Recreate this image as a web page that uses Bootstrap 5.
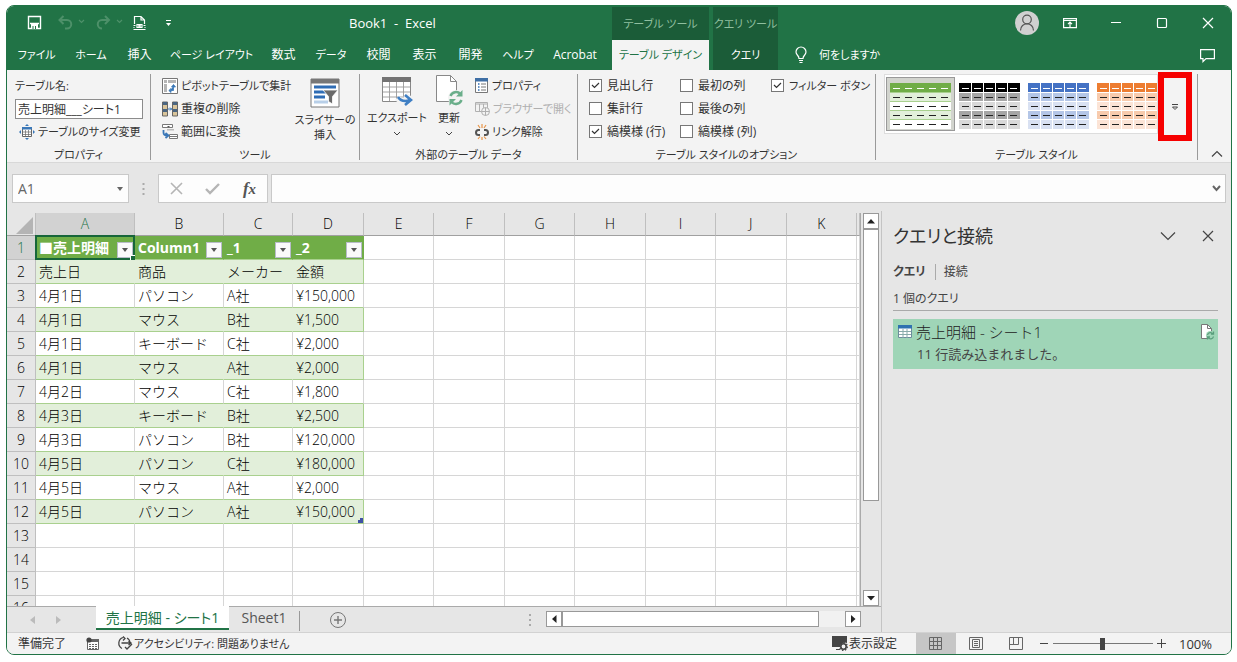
<!DOCTYPE html>
<html lang="ja">
<head>
<meta charset="utf-8">
<meta name="viewport" content="width=device-width, initial-scale=1">
<title>Book1 - Excel</title>
<link href="https://cdn.jsdelivr.net/npm/bootstrap@5.3.0/dist/css/bootstrap.min.css" rel="stylesheet">
<style>
:root{--green:#217346;--deep:#1b5c38;--chrome:#e6e6e6;--ribbon:#f3f3f3;--ink:#333}
body{background:#fff;font:12px/16px "Open Sans","Noto Sans CJK JP",sans-serif;color:var(--ink);font-feature-settings:"palt";overflow:hidden;padding:5px 5px 7px 6px;height:100vh}
button,input{font:inherit;font-feature-settings:inherit;color:inherit;padding:0;border:0;background:none}
svg{display:block;flex:none}
a{color:inherit;text-decoration:none}
/* smaller size for labels that are mostly kana */
.kana{font-size:11px}
.win{height:100%;border:1px solid var(--green);border-radius:8px;overflow:hidden;background:var(--chrome)}
.bar{flex:none}
/* title bar */
.top{background:var(--green);color:#fff;height:65px;margin-top:-1px}
.top-left{flex:0 0 605px}
.title-row{height:35px}
.qa{padding-left:20px}
.doc-title{font-size:13px;padding-left:176px;white-space:pre}
.tabs{display:grid;grid-template-columns:59px 50px 47px 97px 47px 48px 47px 45px 47px 48px 66px;height:30px}
.tabs a,.ctx a{display:flex;align-items:center;justify-content:center;white-space:nowrap}
.ctx{background:var(--deep);margin-top:2px;margin-right:4px;font-size:11px}
.ctx a{height:30px}
.ctx .cap{height:33px;color:#8fbf9f;display:flex;align-items:center;justify-content:center;white-space:nowrap}
.ctx.t1{width:97px}.ctx.t2{width:65px}
.ctx a.on{background:var(--ribbon);color:var(--green)}
.ctrl{width:46px;display:flex;justify-content:center}
/* ribbon */
.ribbon{background:var(--ribbon);height:93px;border-bottom:1px solid #d8d8d8}
.grp{border-right:1px solid #9a9a9a;height:86px;margin-top:4px;min-width:0}
.grp-body{height:74px}
.grp-name{text-align:center;font-size:11px;height:16px;margin-top:-1px}
.cmds{display:grid;grid-auto-rows:23px;align-items:center;white-space:nowrap;align-content:start}
.cmds button,.cmds label{display:flex;align-items:center;gap:3px}
.cmds label{gap:5px}
.tname{border:1px solid #8c8c8c;background:#fff;width:128px;height:20px;padding:0 2px}
.big{display:flex;flex-direction:column;align-items:center;white-space:nowrap;line-height:15px;font-size:11px}
.form-check-input{margin:0;width:13px;height:13px;border:1px solid #777;border-radius:0!important;background-color:#fff;background-size:13px;flex:none}
.form-check-input:checked{background-color:#fff;border-color:#777;background-image:url("data:image/svg+xml,%3Csvg xmlns='http://www.w3.org/2000/svg' viewBox='0 0 13 13'%3E%3Cpath d='M3 6l2.500 2.500 4.500-4.500' fill='none' stroke='%23333' stroke-width='1.200'/%3E%3C/svg%3E")}
.gallery{background:#fff;border:1px solid #ddd;height:60px;margin-left:8px;width:274px;padding:2px 0 0 1px}
.gallery button{width:69px;height:54px;padding:4px 4px 0;overflow:hidden;display:block}
.gallery button.sel{background:#d2d4ce;outline:1px solid #999;outline-offset:-1px}
.g0{--h:#70ad47;--a:#e2efda;--b:#fff;--s:#a9d08e}
.g1{--h:#000;--a:#a6a6a6;--b:#d9d9d9;--s:#fff}
.g2{--h:#4472c4;--a:#b4c6e7;--b:#d9e1f2;--s:#fff}
.g3{--h:#ed7d31;--a:#f8cbad;--b:#fce4d6;--s:#fff}
.more{width:34px;height:69px;border:6px solid #f60000;margin-top:-2px;display:flex;align-items:center;justify-content:center;background:var(--ribbon)}
/* formula bar */
.fbar{height:48px;padding:11px 5px 8px 5px}
.fbox{background:#fdfdfd;border:1px solid #c9c9c9;height:29px;display:flex;align-items:center}
.namebox{width:117px;padding:0 5px}
.namebox input{width:80px;font-size:14px;color:#666}
/* sheet */
.main{min-height:0;flex:1 1 0}
.left{flex:0 1 875px;border-right:1px solid #c4c4c4}
.gridwrap{min-height:0;overflow:hidden;width:854px;border-right:1px solid #aaa;margin-top:2px}
.sheet{table-layout:fixed;border-collapse:separate;border-spacing:0;width:100%;font:300 14px/20px "Open Sans","Noto Sans CJK JP",sans-serif;font-feature-settings:normal;background:#fff;color:#000}
.sheet th{font-weight:300;background:var(--chrome);text-align:center;padding:0;border-right:1px solid #bfbfbf;border-bottom:1px solid #bfbfbf;height:24px}
.sheet td{height:24px;padding:0 0 0 3px;border-right:1px solid #d6d6d6;border-bottom:1px solid #d6d6d6;white-space:nowrap;position:relative;line-height:20px}
.sheet thead th{border-bottom-color:#a0a0a0;height:23px}
.sheet th.hot{background:#d2d2d2;color:var(--green)}
.sheet thead th.hot{border-bottom:1px solid var(--green)}
.sheet td.t{border-bottom-color:#a9d08e}
.sheet td.band{background:#e2efda;border-right-color:#e2efda}
.sheet td.band.last{border-right-color:#a9d08e}
.sheet td.hd{background:#70ad47;border-right-color:#70ad47;color:#fff;font-weight:700}
.filt{position:absolute;right:1px;bottom:1px;width:16px;height:16px;background:#fafafa;border:1px solid #b8bcc8;display:flex;align-items:center;justify-content:center}
.cursor{position:absolute;inset:-1px;border:2px solid #17663a;pointer-events:none}
.cursor::after{content:"";position:absolute;right:-3px;bottom:-3px;box-sizing:content-box;width:4px;height:4px;background:#17663a;border:1px solid #fff}
.corner{position:absolute;right:0;bottom:0;width:5px;height:5px;border:solid #3f51a5;border-width:0 3px 3px 0}
.vs{width:16px;margin:2px 2px 0 2px}
.sbtn{width:16px;height:16px;border:1px solid #999;background:#fff;display:flex;align-items:center;justify-content:center;flex:none}
.thumb{background:#fff;border:1px solid #999}
.sheets{height:26px;border-top:1px solid #aaa;font-size:14px}
.sheets a{white-space:nowrap}
.sheets a.cur{background:#fff;border-bottom:2px solid var(--green);width:133px;height:24px;line-height:23px;text-align:center;color:var(--green);margin:-1px 0 0}
.hs{width:315px;margin-top:4px}
/* query pane */
.pane{padding:11px 13px 0 11px;color:#444}
.pane h2{font-size:18px;line-height:28px;margin:0;color:#333}
.pane nav a+a{border-left:1px solid #aaa}
.pane nav a{padding-right:9px}
.count{margin-top:11px;padding-bottom:3px;border-bottom:1px solid #aaa}
.qcard{background:#9fd5b7;height:50px;padding:3px 3px 0 5px;margin-top:8px;font-feature-settings:normal}
.qcard .nm{font-size:15px;line-height:20px;font-weight:300;color:#222}
.qcard .st{font-size:13px;line-height:18px;padding-left:19px;margin-top:3px}
/* status bar */
.status{background:var(--ribbon);height:22px;border-top:1px solid #d2d2d2;white-space:nowrap}
.view{width:40px;height:22px;display:flex;align-items:center;justify-content:center}
.view.on{background:#c6c6c6}
.zoom{-webkit-appearance:none;appearance:none;width:100px;height:14px;margin:0 4px;background:linear-gradient(#777,#777) center/100% 1px no-repeat}
.zoom::-webkit-slider-thumb{-webkit-appearance:none;width:5px;height:12px;background:#444}
</style>
</head>
<body>
<svg width="0" height="0" class="position-absolute" aria-hidden="true">
<symbol id="thumb" viewBox="0 0 61 46">
<g stroke="none"><path d="M0 0h61v10H0z" fill="var(--h)"/><path d="M0 10h61v9H0zM0 28h61v9H0z" fill="var(--a)"/><path d="M0 19h61v9H0zM0 37h61v9H0z" fill="var(--b)"/></g>
<path d="M0 9.500h61M0 18.500h61M0 27.500h61M0 36.500h61" stroke="var(--s)"/>
<path d="M3 5.500h59" stroke="#fff" stroke-dasharray="7 5"/>
<path d="M3 14.500h59M3 23.500h59M3 32.500h59M3 41.500h59" stroke="#222" stroke-dasharray="7 5"/>
</symbol>
<symbol id="cols" viewBox="0 0 61 46"><path d="M12.500 0v46M24.500 0v46M36.500 0v46M48.500 0v46" stroke="#fff"/></symbol>
</svg>
<div class="win d-flex flex-column">
<header class="top bar d-flex">
  <div class="top-left">
    <div class="title-row d-flex align-items-center">
      <div class="qa d-flex align-items-center">
        <button aria-label="保存"><svg width="15" height="15" fill="none" stroke="#fff" stroke-width="1.400"><path d="M1.500 1.500h12v12h-12zM3 8.500h9"/><path d="M4 9h7v5H4z" fill="#fff" stroke="none"/><path d="M6 14v-3M8.500 14v-3" stroke="#217346" stroke-width="1"/></svg></button>
        <button aria-label="元に戻す" class="ms-3"><svg width="29" height="15" fill="none" stroke="#4d9069" stroke-width="2"><path d="M5.500 1L1.500 5l4 4M2 5h7a4 4 0 0 1 0 8.500H7"/><path d="M21 5l2.500 2.500L26 5" stroke-width="1.200"/></svg></button>
        <button aria-label="やり直し" class="ms-2"><svg width="30" height="15" fill="none" stroke="#4d9069" stroke-width="2"><path d="M10 1l4 4-4 4M14 5H7a4 4 0 0 0 0 8.500"/><path d="M22 5l2.500 2.500L27 5" stroke-width="1.200"/></svg></button>
        <button aria-label="印刷プレビュー" class="ms-2"><svg width="14" height="16" fill="none" stroke="#fff" stroke-width="1.200"><path d="M1.500 9V1.500h6.500l3.500 3.500V9M8 1.500V5h3.500M.5 14.500h12"/><path d="M.5 10.500h2M10.500 10.500h2M.5 12.500h1M11.500 12.500h1M4 9.500h5v3H4z"/><circle cx="6.500" cy="11" r=".8"/></svg></button>
        <button aria-label="ツールバーのカスタマイズ" class="ms-3"><svg width="10" height="10"><path d="M3 2.500h5" stroke="#fff"/><path d="M3 5h5L5.500 8z" fill="#fff"/></svg></button>
      </div>
      <span class="doc-title">Book1  -  Excel</span>
    </div>
    <nav class="tabs">
      <a class="kana" href="#">ファイル</a><a class="kana" href="#">ホーム</a><a href="#">挿入</a><a class="kana" href="#">ページ レイアウト</a><a href="#">数式</a><a class="kana" href="#">データ</a><a href="#">校閲</a><a href="#">表示</a><a href="#">開発</a><a class="kana" href="#">ヘルプ</a><a href="#">Acrobat</a>
    </nav>
  </div>
  <div class="ctx t1"><div class="cap">テーブル ツール</div><a class="on" href="#">テーブル デザイン</a></div>
  <div class="ctx t2"><div class="cap">クエリ ツール</div><a href="#">クエリ</a></div>
  <div class="flex-fill d-flex flex-column">
    <div class="title-row d-flex align-items-center justify-content-end">
      <svg width="24" height="24" class="me-2"><circle cx="12" cy="12" r="12" fill="#d0d0d0"/><g fill="none" stroke="#555" stroke-width="1.200"><circle cx="12" cy="8.500" r="4.300"/><path d="M5.500 19.500c0-9 13-9 13 0"/></g></svg>
      <button class="ctrl" aria-label="リボンの表示オプション"><svg width="14" height="12" fill="none" stroke="#fff" stroke-width="1.200"><path d="M.6 1.600h12.800v9H.6zM.6 3.500h12.800M7 10V5.500M5 7.200l2-2 2 2"/></svg></button>
      <button class="ctrl" aria-label="最小化"><svg width="12" height="12"><path d="M1 5.500h10" stroke="#fff" stroke-width="1.200"/></svg></button>
      <button class="ctrl" aria-label="最大化"><svg width="12" height="12"><rect x="1.500" y="1.500" width="9" height="9" rx="1" fill="none" stroke="#fff" stroke-width="1.200"/></svg></button>
      <button class="ctrl" aria-label="閉じる"><svg width="12" height="12"><path d="M1 1l10 10M11 1L1 11" stroke="#fff" stroke-width="1.200"/></svg></button>
    </div>
    <div class="d-flex align-items-center pe-3 flex-fill" style="padding-left:13px">
      <svg width="12" height="18" fill="none" stroke="#fff" stroke-width="1.200"><path d="M4 12.500C4 9.500 1 9 1 6a5 5 0 0 1 10 0c0 3-3 3.500-3 6.500zM4 14.500h4M4.500 16.500h3"/></svg>
      <a href="#" class="kana ms-2 ps-1">何をしますか</a>
      <button class="ms-auto" aria-label="コメント"><svg width="15" height="15" fill="none" stroke="#fff" stroke-width="1.200"><path d="M.6 1.600h13.800v9H6l-3 3v-3H.6z"/></svg></button>
    </div>
  </div>
</header>

<section class="ribbon bar d-flex">
  <div class="grp" style="flex:0 0 144px">
    <div class="grp-body cmds px-2">
      <label for="tn" class="kana">テーブル名:</label>
      <input id="tn" class="tname" value="売上明細___シート1">
      <button class="kana ps-1"><svg width="16" height="16"><path d="M3.500 3.500h9v9h-9z" fill="#fff" stroke="#666"/><path d="M3 3h10v2.500H3z" fill="#3b78b8"/><path d="M4 8h8M4 10.500h8M6.500 6v6M9.500 6v6" stroke="#666" stroke-width=".7"/><path d="M0 8l2-2v4zM16 8l-2-2v4zM8 0L6 2h4zM8 16l-2-2h4z" fill="#3b78b8"/></svg>テーブルのサイズ変更</button>
    </div>
    <div class="grp-name">プロパティ</div>
  </div>
  <div class="grp" style="flex:0 0 209px">
    <div class="grp-body d-flex">
      <div class="cmds" style="flex:0 0 136px;padding-left:11px">
        <button class="kana"><svg width="16" height="16"><path d="M.5.5h15v15H.5z" fill="#fff" stroke="#777"/><path d="M2 2h3v3H2zM6 2h8v3H6zM2 6h3v8H2z" fill="#b5b5b5"/><path d="M8 12.500h3.500V8M6.800 12.500L9 10.500v4zM11.500 6.500l-2 2.500h4z" fill="#3b78b8" stroke="#3b78b8" stroke-width=".8"/></svg>ピボットテーブルで集計</button>
        <button><svg width="16" height="16"><path d="M.5 1h5v14h-5zM10.500 1h5v14h-5z" fill="#d9c49a" stroke="#666"/><path d="M1 1h4v3H1zM1 8h4v3H1zM11 1h4v3h-4zM11 8h4v3h-4z" fill="#4a6582"/><path d="M6 8h4M8 6.500L9.500 8 8 9.500" stroke="#3b78b8" fill="none"/></svg>重複の削除</button>
        <button><svg width="16" height="16"><path d="M.5.500h10v3H.5zM7.500 10.500h8v4h-8zM7.500 12.500h8" fill="#fff" stroke="#777"/><path d="M1.500 6v2.500q0 3 4 3M3.500 9l3 2.500-3 2.500" fill="none" stroke="#3b78b8" stroke-width="1.800"/><path d="M5 2h3L6.500 3.500z" fill="#555"/><path d="M5 6.500h7v-1.500H5z" fill="#bbb"/></svg>範囲に変換</button>
      </div>
      <button class="big flex-fill"><svg width="30" height="30" class="mb-1 mt-1"><path d="M1 1h28v28H1z" fill="#fff" stroke="#777"/><path d="M1 1h28v4.500H1z" fill="#777"/><path d="M4 9h22M4 14h13M4 19h11" stroke="#2f6db5" stroke-width="3"/><path d="M4 24h14" stroke="#b8cfe8" stroke-width="3"/><path d="M13 12h15l-5.500 6.500V26l-4-2.500v-5z" fill="#6b6b6b" stroke="#fff" stroke-width=".8"/></svg>スライサーの<br>挿入</button>
    </div>
    <div class="grp-name">ツール</div>
  </div>
  <div class="grp" style="flex:0 0 218px">
    <div class="grp-body d-flex">
      <button class="big" style="flex:0 0 74px"><svg width="32" height="32" class="mb-1"><path d="M1.500 3.500h28v24h-28z" fill="#fff" stroke="#888"/><path d="M1 3h29v5H1z" fill="#737373"/><path d="M2 13h27M2 18h27M2 23h27M8.500 8v19M15.500 8v19M22.500 8v19" stroke="#999" stroke-width=".9"/><path d="M16 24q5 5 12 2M24 21l6 5-6 5" fill="none" stroke="#f3f3f3" stroke-width="6"/><path d="M17 23q4 6 12 3M24 21l6 5-6 5" fill="none" stroke="#3f7fc4" stroke-width="2.600"/></svg>エクスポート<svg width="8" height="14"><path d="M1 7l3 3 3-3" fill="none" stroke="#444"/></svg></button>
      <button class="big" style="flex:0 0 26px"><svg width="30" height="32" class="mb-1"><path d="M2.500 1.500h14l6 6v20h-20z" fill="#fff" stroke="#888"/><path d="M16.500 1.500v6h6" fill="none" stroke="#888"/><circle cx="22" cy="24" r="8" fill="#f3f3f3"/><path d="M16.500 22a6 6 0 0 1 10-2M27.500 26a6 6 0 0 1-10 2" fill="none" stroke="#6aae8a" stroke-width="2.400"/><path d="M28.500 16v6.500H22zM15.500 31.500V25H22z" fill="#6aae8a"/></svg>更新<svg width="8" height="14"><path d="M1 7l3 3 3-3" fill="none" stroke="#444"/></svg></button>
      <div class="cmds kana" style="padding-left:11px">
        <button><svg width="14" height="15"><path d="M.5.5h12v14H.5z" fill="#fff" stroke="#777"/><path d="M0 0h13v3.500H0z" fill="#3f6fa5"/><path d="M3 6h1.500M3 9h1.500M3 12h1.500" stroke="#2f6db5" stroke-width="1.500"/><path d="M6 6h5M6 9h5M6 12h5" stroke="#777"/></svg>プロパティ</button>
        <button disabled style="color:#b0b0b0"><svg width="15" height="15" fill="none" stroke="#b0b0b0"><path d="M.5 1.500h12v9H.5zM.5 3h12M4.500 3v7M8.500 3v4"/><circle cx="10.500" cy="10.500" r="4" fill="#f3f3f3"/><path d="M6.500 10.500h8M10.500 6.500v8"/></svg>ブラウザーで開く</button>
        <button><svg width="14" height="16"><path d="M5 6H3.500a2 2 0 0 0 0 5H5M9 6h1.500a2 2 0 0 1 0 5H9" fill="none" stroke="#555" stroke-width="2"/><path d="M7 0v4M3 1l2 3M11 1L9 4M7 16v-3M3 15l2-2.500M11 15l-2-2.500" stroke="#e8964a" stroke-width="1.200"/></svg>リンク解除</button>
      </div>
    </div>
    <div class="grp-name">外部のテーブル データ</div>
  </div>
  <div class="grp" style="flex:0 0 298px">
    <div class="grp-body cmds" style="grid-template-columns:91px 91px 1fr;padding-left:11px">
      <label><input class="form-check-input" type="checkbox" checked>見出し行</label><label><input class="form-check-input" type="checkbox">最初の列</label><label class="kana"><input class="form-check-input" type="checkbox" checked>フィルター ボタン</label>
      <label><input class="form-check-input" type="checkbox">集計行</label><label><input class="form-check-input" type="checkbox">最後の列</label><span></span>
      <label><input class="form-check-input" type="checkbox" checked>縞模様 (行)</label><label><input class="form-check-input" type="checkbox">縞模様 (列)</label>
    </div>
    <div class="grp-name">テーブル スタイルのオプション</div>
  </div>
  <div class="grp" style="flex:0 0 322px">
    <div class="grp-body d-flex">
      <div class="gallery d-flex overflow-hidden">
        <button class="g0 sel flex-shrink-0" aria-label="緑"><svg width="61" height="46"><use href="#thumb"/></svg></button>
        <button class="g1 flex-shrink-0" aria-label="黒"><svg width="61" height="46"><use href="#thumb"/><use href="#cols"/></svg></button>
        <button class="g2 flex-shrink-0" aria-label="青"><svg width="61" height="46"><use href="#thumb"/><use href="#cols"/></svg></button>
        <button class="g3 flex-shrink-0" aria-label="オレンジ"><svg width="61" height="46"><use href="#thumb"/><use href="#cols"/></svg></button>
      </div>
      <button class="more" aria-label="その他"><svg width="8" height="8" fill="none" stroke="#444"><path d="M1 1.500h6M1.500 4L4 6.500 6.500 4z"/></svg></button>
    </div>
    <div class="grp-name">テーブル スタイル</div>
  </div>
  <button class="ms-auto me-2 align-self-end pb-1" aria-label="リボンを折りたたむ"><svg width="12" height="8"><path d="M1 6.500l5-5 5 5" fill="none" stroke="#444" stroke-width="1.200"/></svg></button>
</section>

<section class="fbar bar d-flex">
  <div class="fbox namebox justify-content-between"><input aria-label="名前ボックス" value="A1"><svg width="6" height="4"><path d="M0 0h6L3 4z" fill="#666"/></svg></div>
  <svg width="29" height="29"><path d="M14.500 9v12" stroke="#aaa" stroke-width="2" stroke-dasharray="2 3"/></svg>
  <div class="fbox justify-content-between" style="flex:0 0 110px;padding:0 11px">
    <button aria-label="キャンセル"><svg width="13" height="13"><path d="M1 1l11 11M12 1L1 12" stroke="#b5b5b5" stroke-width="1.600"/></svg></button>
    <button aria-label="入力"><svg width="15" height="13"><path d="M1 7l4 4 9-9" fill="none" stroke="#b5b5b5" stroke-width="2.400"/></svg></button>
    <button aria-label="関数の挿入" style="font:italic bold 17px/20px 'Liberation Serif',serif;color:#555">f<small>x</small></button>
  </div>
  <div class="fbox flex-fill pe-1" style="margin-left:3px"><input class="flex-fill" aria-label="数式バー"><svg width="9" height="7"><path d="M1 1l3.500 4L8 1" fill="none" stroke="#666" stroke-width="2"/></svg></div>
</section>

<main class="main d-flex">
  <div class="left d-flex flex-column">
    <div class="d-flex main">
      <div class="gridwrap"><table class="sheet" id="sheet">
        <colgroup><col style="width:29px"><col style="width:99px"><col style="width:89px"><col style="width:69px"><col style="width:71px"><col><col><col><col><col><col><col><col style="width:3px"></colgroup>
      </table></div>
      <div class="vs d-flex flex-column">
        <button class="sbtn" aria-label="上へ"><svg width="8" height="5"><path d="M0 4.500h8L4 0z" fill="#222"/></svg></button>
        <div class="thumb" style="flex:272 1 0"></div><div style="flex:90 1 0"></div>
        <button class="sbtn" aria-label="下へ"><svg width="8" height="5"><path d="M0 0h8L4 4.500z" fill="#222"/></svg></button>
      </div>
    </div>
    <div class="sheets bar d-flex">
      <div class="d-flex align-items-center justify-content-center" style="flex:0 0 89px;gap:20px;padding-right:12px"><svg width="6" height="8"><path d="M5 0v8L0 4z" fill="#bbb"/></svg><svg width="6" height="8"><path d="M0 0v8l5-4z" fill="#bbb"/></svg></div>
      <a href="#" class="cur">売上明細 - シート1</a>
      <a href="#" style="flex:0 0 70px;line-height:22px;text-align:center;color:#555">Sheet1</a>
      <svg width="1" height="20" class="mt-1"><path d="M.5 0v20" stroke="#999"/></svg>
      <button aria-label="新しいシート" class="ms-4 ps-1"><svg width="20" height="20" fill="none" stroke="#777"><circle cx="10" cy="10" r="7.500"/><path d="M6 10h8M10 6v8" stroke-width="1.400"/></svg></button>
      <svg width="12" height="24" class="ms-auto me-2"><path d="M4 7v12" stroke="#aaa" stroke-width="2" stroke-dasharray="2 3"/></svg>
      <div class="hs d-flex" style="margin-right:20px">
        <button class="sbtn" aria-label="左へ"><svg width="5" height="8"><path d="M4.500 0v8L0 4z" fill="#222"/></svg></button>
        <div class="thumb" style="flex:257 1 0;height:16px"></div><div style="flex:26 1 0;height:16px;background:#f1f1f1"></div>
        <button class="sbtn" aria-label="右へ"><svg width="5" height="8"><path d="M0 0v8l4.500-4z" fill="#222"/></svg></button>
      </div>
    </div>
  </div>
  <aside class="pane flex-fill">
    <div class="d-flex align-items-center"><h2 class="fw-normal">クエリと接続</h2>
      <button class="ms-auto" aria-label="オプション"><svg width="16" height="10"><path d="M1 1.500l7 7 7-7" fill="none" stroke="#444" stroke-width="1.200"/></svg></button>
      <button class="me-1" style="margin-left:26px" aria-label="閉じる"><svg width="12" height="12"><path d="M1 1l10 10M11 1L1 11" stroke="#444" stroke-width="1.200"/></svg></button>
    </div>
    <nav class="d-flex" style="margin-top:14px"><a href="#" class="fw-bold">クエリ</a><a href="#" class="ps-2">接続</a></nav>
    <div class="count">1 個のクエリ</div>
    <div class="qcard">
      <div class="d-flex align-items-center nm"><svg width="14" height="14" class="me-1"><path d="M.5.5h13v12H.5z" fill="#fff" stroke="#6c8c9c"/><path d="M0 0h14v3.500H0z" fill="#2f72b0"/><path d="M1 6.500h12M1 9.500h12M5 4v9M9 4v9" stroke="#8aa"/></svg><span>売上明細 - シート1</span>
      <svg width="15" height="16" class="ms-auto"><path d="M1.500.5h6l4 4v10h-10z" fill="#fff" stroke="#777"/><path d="M7.500.5v4h4" fill="none" stroke="#777"/><circle cx="10.500" cy="11.500" r="4.500" fill="#9fd5b7"/><path d="M7.500 11a3 3 0 0 1 5.500-1M13.500 12.500a3 3 0 0 1-5.500 1M13.500 7.500V10H11M7.500 15.500V13H10" fill="none" stroke="#5a9e7c" stroke-width="1.300"/></svg></div>
      <div class="st">11 行読み込まれました。</div>
    </div>
  </aside>
</main>

<footer class="status bar d-flex align-items-center">
  <span style="padding-left:11px">準備完了</span>
  <svg width="13" height="13" style="margin-left:20px"><path d="M1.500 2.500h11v10h-11z" fill="#fff" stroke="#666"/><path d="M4 2h9v3H4z" fill="#666"/><circle cx="3" cy="3" r="2.600" fill="#444"/><path d="M3 7.500h8M3 9.500h8M3 11.500h8" stroke="#666" stroke-dasharray="2 1"/></svg>
  <a href="#" class="kana d-flex align-items-center" style="margin-left:18px"><svg width="17" height="15" fill="none" stroke="#444" stroke-width="1.300"><path d="M6 1.500a6 6 0 0 0-1 11M6 .5l2 2-2 2M10 2a6 6 0 0 1 3 5M4.500 7h9M11.500 5l2.500 2-2.500 2M8 11l2 2 5-5"/></svg>アクセシビリティ: 問題ありません</a>
  <a href="#" class="d-flex align-items-center ms-auto"><svg width="17" height="15"><path d="M0 0h15v7a5 5 0 0 0-7 4H0z" fill="#444"/><path d="M4 13.500h4" stroke="#444"/><circle cx="11.500" cy="10.500" r="2.700" fill="none" stroke="#444" stroke-width="1.600"/><circle cx="11.500" cy="10.500" r="3.900" fill="none" stroke="#444" stroke-width="1.200" stroke-dasharray="1.500 1.500"/></svg>表示設定</a>
  <div class="d-flex" style="margin-left:19px">
    <button class="view on" aria-label="標準"><svg width="14" height="14" fill="none" stroke="#666"><path d="M.5.5h12v12H.5zM4.500.5v12M8.500.5v12M.5 4.500h12M.5 8.500h12"/></svg></button>
    <button class="view" aria-label="ページ レイアウト"><svg width="14" height="13" fill="none" stroke="#666"><path d="M.5.500h13v12H.5zM3.500 2.500h7v8h-7zM5 4.500h4M5 6.500h4M5 8.500h4"/></svg></button>
    <button class="view" aria-label="改ページ プレビュー"><svg width="14" height="13" fill="none" stroke="#666"><path d="M.5.500h13v12H.5zM4.500.5v7M9.500.5v7M.5 7.500h9"/></svg></button>
  </div>
  <svg width="9" height="9" class="ms-1"><path d="M0 4.500h8" stroke="#444"/></svg>
  <input class="zoom" type="range" aria-label="ズーム" min="0" max="100" value="50">
  <svg width="9" height="9"><path d="M0 4.500h9M4.500 0v9" stroke="#444"/></svg>
  <span style="font-size:13px;margin:0 19px 0 13px">100%</span>
</footer>
</div>
<script>
const rows=[["■売上明細","Column1","_1","_2"],["売上日","商品","メーカー","金額"],["4月1日","パソコン","A社","¥150,000"],["4月1日","マウス","B社","¥1,500"],["4月1日","キーボード","C社","¥2,000"],["4月1日","マウス","A社","¥2,000"],["4月2日","マウス","C社","¥1,800"],["4月3日","キーボード","B社","¥2,500"],["4月3日","パソコン","B社","¥120,000"],["4月5日","パソコン","C社","¥180,000"],["4月5日","マウス","A社","¥2,000"],["4月5日","パソコン","A社","¥150,000"]];
let h='<thead><tr><th><svg width="17" height="17" style="margin:3px 0 0 9px"><path d="M17 0v17H0z" fill="#b4b4b4"/></svg></th>';
for(const c of "ABCDEFGHIJK")h+=`<th class="${c=="A"?"hot":""}">${c}</th>`;
h+="<th></th></tr></thead><tbody>";
for(let r=0;r<16;r++){
  h+=`<tr><th class="${r?"":"hot"}">${r+1}</th>`;
  for(let c=0;c<12;c++){
    const v=rows[r]&&c<4?rows[r][c]:null;
    let k="",x="";
    if(v){
      k="t"+(r==0?" hd":r%2?" band":"")+(c==3?" last":"");
      if(r==0)x='<button class="filt" aria-label="フィルター"><svg width="6" height="4"><path d="M0 0h6L3 4z" fill="#555"/></svg></button>'+(c==0?'<span class="cursor"></span>':"");
      if(r==11&&c==3)x='<span class="corner"></span>';
    }
    h+=`<td class="${k}">${v||""}${x}</td>`;
  }
  h+="</tr>";
}
document.getElementById("sheet").insertAdjacentHTML("beforeend",h+"</tbody>");
</script>
<script src="https://cdn.jsdelivr.net/npm/bootstrap@5.3.0/dist/js/bootstrap.bundle.min.js"></script>
</body>
</html>
